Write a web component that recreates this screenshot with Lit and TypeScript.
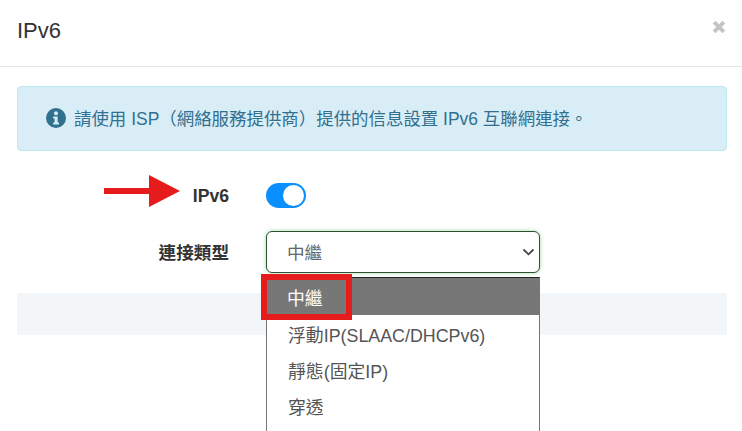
import { LitElement, html, css } from "lit";
import { customElement } from "lit/decorators.js";

@customElement("app-root")
export class AppRoot extends LitElement {
  static styles = css`
    :host {
      display: block;
      position: relative;
      width: 742px;
      height: 431px;
      overflow: hidden;
      background: #fff;
      font-family: "Liberation Sans", Arial, "Noto Sans CJK TC", sans-serif;
      color: #333;
    }
    .header {
      height: 67px;
      box-sizing: border-box;
      border-bottom: 1px solid #e5e5e5;
      display: flex;
      align-items: center;
      justify-content: space-between;
      padding: 0 16px 4px 17px;
    }
    .title { font-size: 22px; line-height: 30px; color: #333; }
    .close { width: 14px; height: 14px; margin-bottom: 8px; }
    .body { padding: 19px 15px 0 17px; }
    .alert {
      height: 65px;
      box-sizing: border-box;
      background: #d9edf7;
      border: 1px solid #bce8f1;
      border-radius: 4px;
      color: #31708f;
      display: flex;
      align-items: center;
      gap: 8px;
      padding: 0 0 3px 28px;
      font-size: 17.45px;
    }
    .alert svg { width: 20px; height: 20px; flex: none; margin-top: 1px; }
    .row { display: flex; align-items: center; }
    .label {
      width: 212px;
      text-align: right;
      font-weight: 700;
      font-size: 17.6px;
      color: #333;
      flex: none;
    }
    .row1 { margin-top: 29px; height: 30px; }
    .row1 .label { padding-top: 2px; }
    .row2 .label { padding-bottom: 2px; }
    .switch {
      margin-left: 37px;
      width: 40px;
      height: 25px;
      border-radius: 13px;
      background: #0a8fff;
      position: relative;
      flex: none;
    }
    .switch::after {
      content: "";
      position: absolute;
      right: 2px;
      top: 2px;
      width: 21px;
      height: 21px;
      border-radius: 50%;
      background: #fff;
    }
    .row2 { margin-top: 21px; height: 42px; }
    .select {
      margin-left: 37px;
      width: 274px;
      height: 42px;
      box-sizing: border-box;
      border: 1px solid #28532e;
      border-radius: 6px;
      box-shadow: 0 0 4px rgba(70, 160, 70, 0.45);
      display: flex;
      align-items: center;
      justify-content: space-between;
      padding: 0 4px 2px 20px;
      font-size: 17.6px;
      color: #666;
      background: #fff;
    }
    .select svg { width: 13px; height: 8px; margin-top: 2px; }
    .band { margin-top: 20px; height: 42px; background: #f3f6f9; }
    .menu {
      position: absolute;
      left: 266px;
      top: 277px;
      width: 274px;
      height: 170px;
      box-sizing: border-box;
      border: 1px solid #767676;
      border-top-color: #222;
      background: #fff;
      font-size: 17.85px;
      color: #555;
    }
    .opt { height: 36px; line-height: 42px; padding-left: 21px; white-space: nowrap; }
    .opt.first { height: 37px; line-height: 42px; padding-left: 20px; background: #777; color: #fff; }
    .redbox {
      position: absolute;
      left: 261px;
      top: 274px;
      width: 91px;
      height: 46px;
      box-sizing: border-box;
      border: 6px solid #e61c1c;
    }
    .arrow { position: absolute; left: 104px; top: 175px; width: 76px; height: 32px; }
  `;

  render() {
    return html`
      <div class="header">
        <div class="title">IPv6</div>
        <svg class="close" viewBox="0 0 13 13">
          <path d="M2 2 L11 11 M11 2 L2 11" stroke="#c4c4c4" stroke-width="3.6" fill="none" />
        </svg>
      </div>
      <div class="body">
        <div class="alert">
          <svg viewBox="0 0 20 20">
            <circle cx="10" cy="10" r="10" fill="#31708f" />
            <circle cx="10" cy="5.2" r="2" fill="#d9edf7" />
            <path d="M7.2 8.4h4.4v6h1.4v2H7.2v-2h1.4v-4H7.2z" fill="#d9edf7" />
          </svg>
          <span>請使用 ISP（網絡服務提供商）提供的信息設置 IPv6 互聯網連接。</span>
        </div>
        <div class="row row1">
          <div class="label">IPv6</div>
          <div class="switch"></div>
        </div>
        <div class="row row2">
          <div class="label">連接類型</div>
          <div class="select">
            <span>中繼</span>
            <svg viewBox="0 0 13 8">
              <path d="M1.5 1.5 L6.5 6.3 L11.5 1.5" stroke="#444" stroke-width="1.8" fill="none" />
            </svg>
          </div>
        </div>
        <div class="band"></div>
      </div>
      <div class="menu">
        <div class="opt first">中繼</div>
        <div class="opt">浮動IP(SLAAC/DHCPv6)</div>
        <div class="opt">靜態(固定IP)</div>
        <div class="opt">穿透</div>
      </div>
      <div class="redbox"></div>
      <svg class="arrow" viewBox="0 0 76 32">
        <path d="M0 13h45V0l31 16-31 16V19H0z" fill="#e61c1c" />
      </svg>
    `;
  }
}
